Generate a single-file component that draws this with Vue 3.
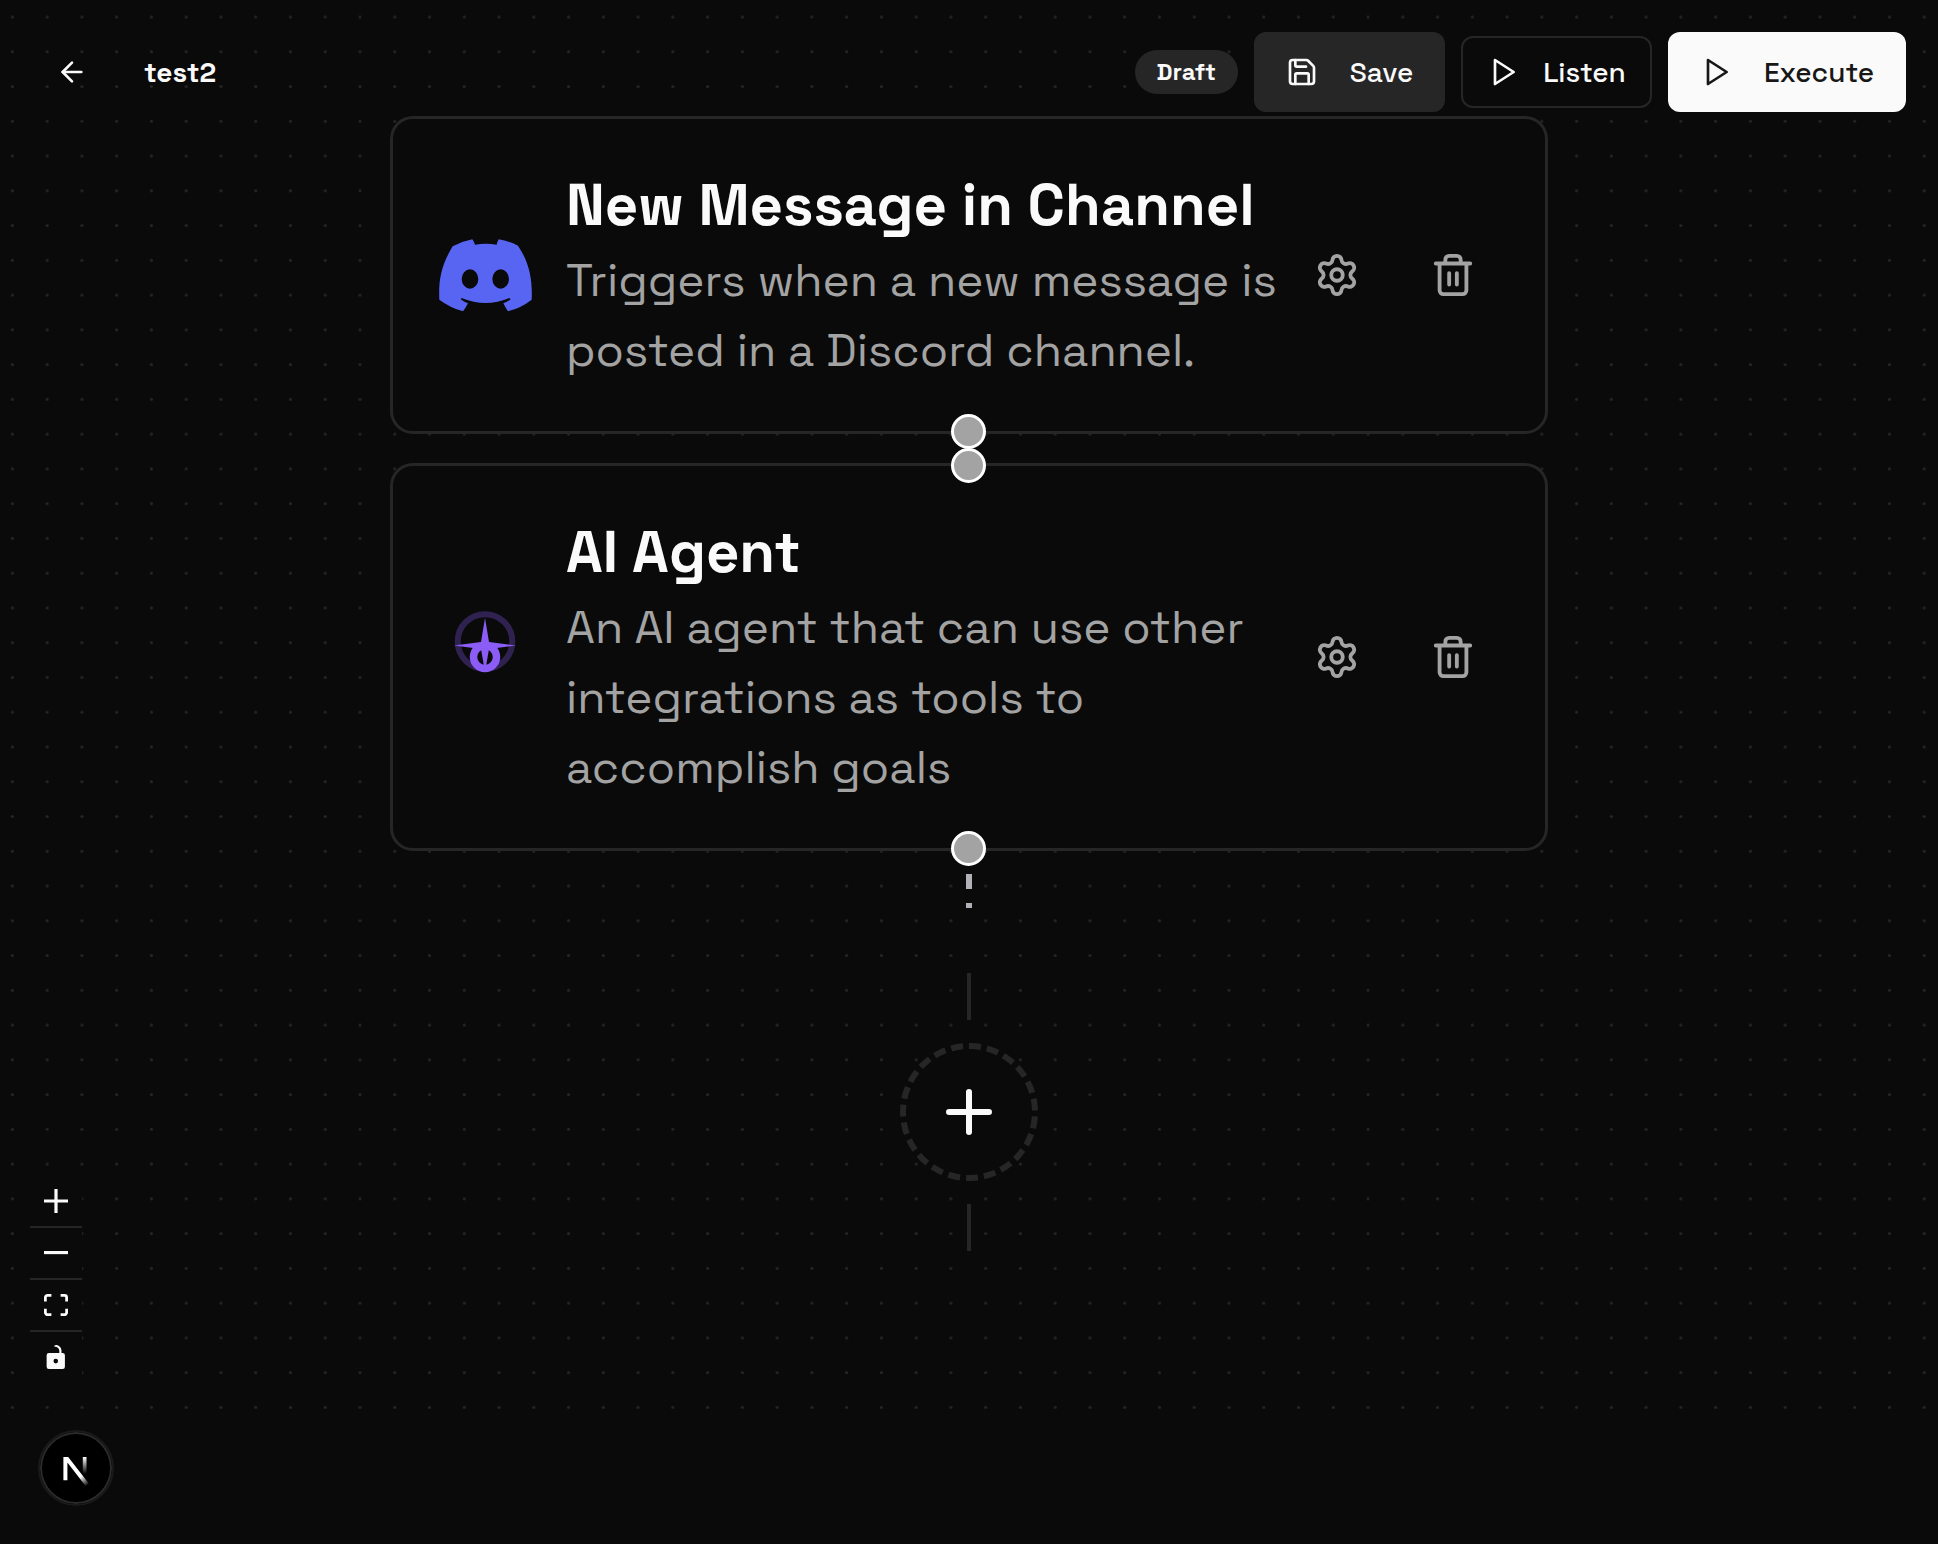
<script setup>
import { ref } from 'vue'

const title = ref('test2')
const viewport = { x: 12.4, y: 17, zoom: 1.738 }
const gridTransform = `translate(${viewport.x - 10 * viewport.zoom} ${viewport.y - 10 * viewport.zoom}) scale(${viewport.zoom})`

const nodes = [
  {
    id: 'trigger',
    kind: 'discord',
    name: 'New Message in Channel',
    description: 'Triggers when a new message is posted in a Discord channel.',
    target: false,
  },
  {
    id: 'agent',
    kind: 'agent',
    name: 'AI Agent',
    description: 'An AI agent that can use other integrations as tools to accomplish goals',
    target: true,
  },
]
</script>

<template>
  <div class="editor">
    <svg class="grid" aria-hidden="true">
      <defs>
        <pattern id="dots" width="20" height="20" patternUnits="userSpaceOnUse" :patternTransform="gridTransform">
          <circle cx="10" cy="10" r="0.87" fill="#262626" />
        </pattern>
      </defs>
      <rect width="100%" height="100%" fill="url(#dots)" />
    </svg>

    <header class="toolbar">
      <button class="back" type="button" aria-label="Back">
        <svg class="icon" viewBox="0 0 24 24"><path d="m12 19-7-7 7-7" /><path d="M19 12H5" /></svg>
      </button>
      <h1 class="title">{{ title }}</h1>
      <span class="badge">Draft</span>
      <button class="btn save" type="button">
        <svg class="icon" viewBox="0 0 24 24">
          <path d="M15.2 3a2 2 0 0 1 1.4.6l3.8 3.8a2 2 0 0 1 .6 1.4V19a2 2 0 0 1-2 2H5a2 2 0 0 1-2-2V5a2 2 0 0 1 2-2z" />
          <path d="M17 21v-7a1 1 0 0 0-1-1H8a1 1 0 0 0-1 1v7" />
          <path d="M7 3v4a1 1 0 0 0 1 1h7" />
        </svg>
        Save
      </button>
      <button class="btn listen" type="button">
        <svg class="icon" viewBox="0 0 24 24"><path d="M6 3l14 9-14 9z" /></svg>
        Listen
      </button>
      <button class="btn execute" type="button">
        <svg class="icon" viewBox="0 0 24 24"><path d="M6 3l14 9-14 9z" /></svg>
        Execute
      </button>
    </header>

    <main class="flow">
      <div class="nodes">
        <article v-for="node in nodes" :key="node.id" class="node">
          <svg v-if="node.kind === 'discord'" class="logo" viewBox="176 386 279 279" aria-hidden="true">
            <path
              fill="#5865f2"
              fill-rule="evenodd"
              d="M177 598C174 536 184 492 217 438Q245 423 276 417Q281 424 284 433Q316 428 349 433Q351 424 355 417Q386 422 413 436C446 485 457 536 454 598Q422 623 383 633Q375 622 369 609Q381 605 391 597L387 593Q316 623 244 593L241 597Q251 605 263 609Q256 623 248 633Q209 622 177 598ZM269 507A25 29 0 1 0 269 565A25 29 0 1 0 269 507ZM361 507A25 29 0 1 0 361 565A25 29 0 1 0 361 507Z"
            />
          </svg>
          <svg v-else class="logo" viewBox="-46 -46 93 93" aria-hidden="true">
            <circle cy="-15.500" r="27.300" fill="none" stroke="#8b5cf6" stroke-opacity=".3" stroke-width="6" />
            <circle r="11.500" fill="none" stroke="#8b5cf6" stroke-width="7.500" />
            <path fill="#8b5cf6" d="M0-39L4-15L31-11.500L4-8L0 15L-4-8L-31-11.500L-4-15Z" />
          </svg>
          <div class="text">
            <h2>{{ node.name }}</h2>
            <p>{{ node.description }}</p>
          </div>
          <div class="actions">
            <button type="button" :aria-label="`Configure ${node.name}`">
              <svg class="icon" viewBox="0 0 24 24">
                <path d="M9.671 4.136a2.34 2.34 0 0 1 4.659 0 2.34 2.34 0 0 0 3.319 1.915 2.34 2.34 0 0 1 2.33 4.033 2.34 2.34 0 0 0 0 3.831 2.34 2.34 0 0 1-2.33 4.033 2.34 2.34 0 0 0-3.319 1.915 2.34 2.34 0 0 1-4.659 0 2.34 2.34 0 0 0-3.32-1.915 2.34 2.34 0 0 1-2.33-4.033 2.34 2.34 0 0 0 0-3.831A2.34 2.34 0 0 1 6.35 6.051a2.34 2.34 0 0 0 3.319-1.915" />
                <circle cx="12" cy="12" r="3" />
              </svg>
            </button>
            <button type="button" :aria-label="`Delete ${node.name}`">
              <svg class="icon" viewBox="0 0 24 24">
                <path d="M3 6h18M19 6v14a2 2 0 0 1-2 2H7a2 2 0 0 1-2-2V6M8 6V4a2 2 0 0 1 2-2h4a2 2 0 0 1 2 2v2M10 11v6M14 11v6" />
              </svg>
            </button>
          </div>
          <span v-if="node.target" class="handle top"></span>
          <span class="handle bottom"></span>
        </article>
      </div>

      <svg class="edge" viewBox="0 0 6 34" aria-hidden="true">
        <path d="M3 0V34" stroke="#b1b1b7" stroke-width="6" stroke-dasharray="15 14" />
      </svg>

      <div class="append">
        <span class="stem"></span>
        <button class="add" type="button" aria-label="Add step">
          <svg viewBox="0 0 46 46"><path d="M23 3V43M3 23H43" /></svg>
        </button>
        <span class="stem"></span>
      </div>
    </main>

    <div class="controls">
      <button type="button" aria-label="Zoom in">
        <svg viewBox="0 0 32 32"><path d="M32 18.133H18.133V32h-4.266V18.133H0v-4.266h13.867V0h4.266v13.867H32z" /></svg>
      </button>
      <button type="button" aria-label="Zoom out">
        <svg viewBox="0 0 32 5"><path d="M0 0h32v4.2H0z" /></svg>
      </button>
      <button type="button" aria-label="Fit view">
        <svg viewBox="0 0 32 30"><path d="M3.692 4.63c0-.53.4-.938.939-.938h5.215V0H4.708C2.13 0 0 2.054 0 4.63v5.216h3.692V4.631zM27.354 0h-5.2v3.692h5.17c.53 0 .984.4.984.939v5.215H32V4.631A4.624 4.624 0 0027.354 0zm.954 24.83c0 .532-.4.94-.939.94h-5.215v3.768h5.215c2.577 0 4.631-2.13 4.631-4.707v-5.139h-3.692v5.139zm-23.677.94c-.531 0-.939-.4-.939-.94v-5.138H0v5.139c0 2.577 2.13 4.707 4.708 4.707h5.138V25.77H4.631z" /></svg>
      </button>
      <button type="button" aria-label="Toggle interactivity">
        <svg viewBox="0 0 25 32"><path d="M21.333 10.667H19.81V7.619C19.81 3.429 16.38 0 12.19 0c-4.114 1.828-1.37 2.133.305 2.438 1.676.305 4.42 2.59 4.42 5.181v3.048H3.047A3.056 3.056 0 000 13.714v15.238A3.056 3.056 0 003.048 32h18.285a3.056 3.056 0 003.048-3.048V13.714a3.056 3.056 0 00-3.048-3.047zM12.19 24.533a3.056 3.056 0 01-3.047-3.047 3.056 3.056 0 013.047-3.048 3.056 3.056 0 013.048 3.048 3.056 3.056 0 01-3.048 3.047z" /></svg>
      </button>
    </div>

    <button class="devtools" type="button" aria-label="Open Next.js Dev Tools">
      <svg viewBox="0 -3 15 19">
        <defs>
          <linearGradient id="fade-diagonal" gradientUnits="userSpaceOnUse" x1="9.950" y1="10.630" x2="13.500" y2="15.200">
            <stop stop-color="#fff" />
            <stop offset="1" stop-color="#fff" stop-opacity="0" />
          </linearGradient>
          <linearGradient id="fade-stem" gradientUnits="userSpaceOnUse" x1="11.800" y1="1" x2="11.800" y2="9.500">
            <stop stop-color="#fff" />
            <stop offset="1" stop-color="#fff" stop-opacity="0" />
          </linearGradient>
        </defs>
        <path d="M1.200 1H3.600L13.900 14.300L12.300 15.500L3.200 3.800V12.600H1.200Z" fill="url(#fade-diagonal)" />
        <path d="M10.900 1h1.860v11h-1.860z" fill="url(#fade-stem)" />
      </svg>
    </button>
  </div>
</template>

<style>
body {
  margin: 0;
  background: #0a0a0a;
}
</style>

<style scoped>
.editor {
  position: relative;
  box-sizing: border-box;
  min-height: 100vh;
  background: #0a0a0a;
  color: #fafafa;
  font-family: "Space Grotesk", Inter, sans-serif;
}

.editor * {
  box-sizing: border-box;
}

button {
  display: flex;
  align-items: center;
  justify-content: center;
  margin: 0;
  padding: 0;
  border: 0;
  background: none;
  color: inherit;
  font: inherit;
  cursor: pointer;
}

.icon {
  flex: none;
  width: 32px;
  height: 32px;
  fill: none;
  stroke: currentColor;
  stroke-width: 2;
  stroke-linecap: round;
  stroke-linejoin: round;
}

.grid {
  position: absolute;
  top: 0;
  left: 0;
  width: 100%;
  height: calc(100% - 120px);
}

.toolbar {
  position: absolute;
  z-index: 2;
  top: 32px;
  left: 32px;
  right: 32px;
  display: flex;
  align-items: center;
  gap: 16px;
  height: 80px;
}

.back {
  width: 80px;
  height: 80px;
}

.title {
  flex: 1;
  margin: 0 0 0 16px;
  font-size: 28px;
  line-height: 40px;
  font-weight: 700;
}

.badge {
  padding: 0 22px;
  border-radius: 22px;
  background: #262626;
  font-size: 24px;
  line-height: 44px;
  font-weight: 600;
}

.btn {
  gap: 32px;
  min-width: 191px;
  height: 80px;
  border-radius: 12px;
  font-size: 28px;
  line-height: 40px;
  font-weight: 500;
  white-space: nowrap;
}

.save {
  background: #262626;
}

.listen {
  gap: 24px;
  height: 72px;
  border: 2px solid #262626;
  background: #0a0a0a;
}

.execute {
  min-width: 238px;
  background: #fafafa;
  color: #171717;
}

.flow {
  position: relative;
  z-index: 1;
  display: flex;
  flex-direction: column;
  align-items: center;
  padding: 116px 32px 292px;
}

.nodes {
  display: flex;
  flex-direction: column;
  gap: 29px;
  width: 100%;
  max-width: 1158px;
}

.node {
  position: relative;
  display: flex;
  align-items: center;
  gap: 34px;
  padding: 46px 57px 46px 46px;
  border: 3px solid #262626;
  border-radius: 23px;
  background: #0a0a0a;
}

.logo {
  flex: none;
  width: 93px;
  height: 93px;
}

.text {
  flex: 1;
  min-width: 0;
  margin-right: -34px;
}

.text h2 {
  margin: 0;
  font-size: 58px;
  line-height: 80px;
  font-weight: 600;
}

.text p {
  margin: 0;
  color: #a3a3a3;
  font-size: 46px;
  line-height: 70px;
  font-weight: 400;
}

.actions {
  display: flex;
  gap: 46px;
  color: #a3a3a3;
}

.actions button {
  width: 70px;
  height: 70px;
}

.actions .icon {
  width: 46px;
  height: 46px;
}

.handle {
  position: absolute;
  left: calc(50% - 18px);
  width: 35px;
  height: 35px;
  border: 3px solid #fff;
  border-radius: 50%;
  background: #a3a3a3;
}

.handle.top {
  top: -18px;
}

.handle.bottom {
  bottom: -18px;
}

.edge {
  width: 6px;
  height: 34px;
  margin-top: 23px;
}

.append {
  display: flex;
  flex-direction: column;
  align-items: center;
  gap: 23px;
  margin-top: 65px;
}

.stem {
  width: 4px;
  height: 47px;
  background: #262626;
}

.add {
  width: 138px;
  height: 138px;
  border: 6px dashed #262626;
  border-radius: 50%;
  background: #0a0a0a;
}

.add svg {
  width: 46px;
  height: 46px;
  stroke: #fafafa;
  stroke-width: 6;
  stroke-linecap: round;
}

.controls {
  position: absolute;
  z-index: 2;
  left: 30px;
  bottom: 160px;
  width: 52px;
  background: #0a0a0a;
}

.controls button {
  width: 52px;
  height: 52px;
  border-bottom: 2px solid #262626;
}

.controls button:last-child {
  border-bottom-color: transparent;
}

.controls svg {
  width: 24px;
  max-height: 24px;
  fill: #fafafa;
}

.devtools {
  position: absolute;
  z-index: 2;
  left: 38px;
  bottom: 38px;
  width: 76px;
  height: 76px;
  border: 2px solid #1a1a1a;
  border-radius: 50%;
  background: #000;
  box-shadow: inset 0 0 0 2px #2a2a2a;
}

.devtools svg {
  width: 30px;
  height: 38px;
}
</style>
